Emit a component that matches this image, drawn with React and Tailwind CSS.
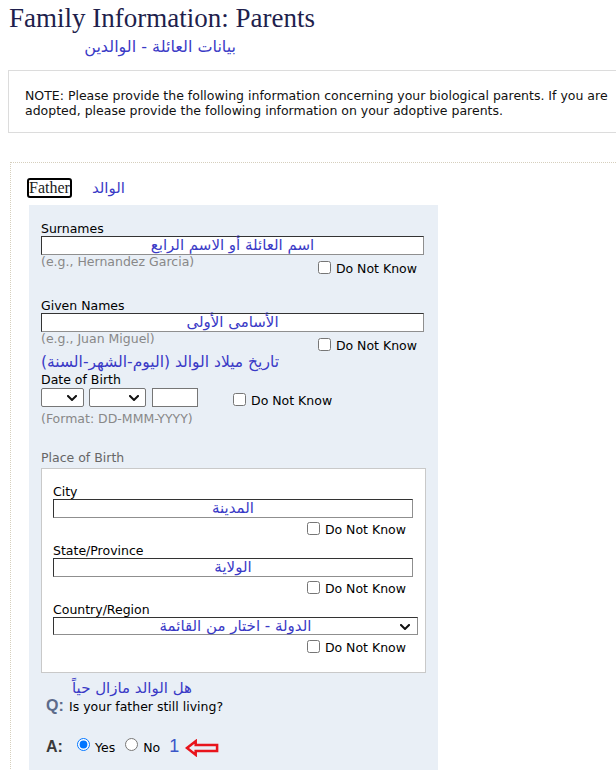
import React from 'react';

const sans = "font-['DejaVu_Sans',sans-serif]";
const arabic = "font-['DejaVu_Sans',sans-serif] text-[#3a3ac6]";
const insetBorder = "border border-t-[#333] border-l-[#333] border-r-[#8f8f8f] border-b-[#8f8f8f] bg-white";

const Chevron = ({ className }) => (
    <svg viewBox="0 0 10 6" className={className} fill="none">
        <path d="M1 1l4 4 4-4" stroke="#111" strokeWidth="2" strokeLinecap="square" />
    </svg>
);

const DoNotKnow = ({ className = '' }) => (
    <label className={`flex items-end gap-[5px] ${className}`}>
        <input type="checkbox" className="w-[13px] h-[13px]" />
        <span className="leading-[13px] translate-y-[1px]">Do Not Know</span>
    </label>
);

const TextBox = ({ text, className = '' }) => (
    <div className={`h-[19px] flex items-center justify-center ${insetBorder} ${className}`}>
        <span className={`${arabic} text-[15px] leading-none`}>{text}</span>
    </div>
);

const App = () => {
    return (
        <div className={`w-[616px] h-[770px] overflow-hidden bg-white text-[12.5px] text-black ${sans}`}>
            {/* Header */}
            <h1 className="pl-[9px] pt-[3px] text-[27px] leading-[30px] text-[#1f1f4d] font-['Liberation_Serif',serif]">
                Family Information: Parents
            </h1>
            <div dir="rtl" className={`${arabic} mt-[4px] w-[236px] text-[16px] leading-[20px] text-right`}>
                بيانات العائلة - الوالدين
            </div>

            {/* Note */}
            <div className="ml-[8px] mt-[13px] w-[640px] border border-[#dcdcdc] pl-[16px] pt-[17px] pb-[14px] leading-[15px] text-[#111] whitespace-nowrap">
                NOTE: Please provide the following information concerning your biological parents. If you are
                <br />
                adopted, please provide the following information on your adoptive parents.
            </div>

            {/* Form section */}
            <div className="ml-[10px] mt-[29px] w-[640px] border border-dotted border-[#d6cfbd] pl-[16px] pt-[15px] pb-[40px]">
                <div className="flex items-center gap-[20px]">
                    <span className="border-2 border-black rounded-[3px] text-[16px] leading-[16px] text-[#222] font-['Liberation_Serif',serif]">
                        Father
                    </span>
                    <span className={`${arabic} text-[15px] leading-[16px]`}>الوالد</span>
                </div>

                <div className="ml-[2px] mt-[7px] w-[409px] bg-[#e9eff6] px-[12px] pt-[17px] pb-[40px]">
                    {/* Surnames */}
                    <div className="leading-[14px]">Surnames</div>
                    <TextBox text="اسم العائلة أو الاسم الرابع" className="w-[383px]" />
                    <div className="flex justify-between w-[383px]">
                        <div className="leading-[14px] text-[#888]">(e.g., Hernandez Garcia)</div>
                        <DoNotKnow className="mt-[6px] mr-[7px]" />
                    </div>

                    {/* Given names */}
                    <div className="mt-[25px] leading-[14px]">Given Names</div>
                    <TextBox text="الأسامى الأولى" className="w-[383px]" />
                    <div className="flex justify-between w-[383px]">
                        <div className="leading-[14px] text-[#888]">(e.g., Juan Miguel)</div>
                        <DoNotKnow className="mt-[6px] mr-[7px]" />
                    </div>

                    {/* Date of birth */}
                    <div className="mt-[1px] flex">
                        <div dir="rtl" className={`${arabic} text-[15.5px] leading-[20px] whitespace-nowrap`}>
                            تاريخ ميلاد الوالد (اليوم-الشهر-السنة)
                        </div>
                    </div>
                    <div className="mt-[1px] leading-[14px]">Date of Birth</div>
                    <div className="mt-[1px] flex items-center">
                        <div className="w-[43px] h-[19px] border border-[#767676] rounded-[2px] bg-white flex items-center justify-end pr-[6px]">
                            <Chevron className="w-[10px] h-[6px]" />
                        </div>
                        <div className="ml-[5px] w-[57px] h-[19px] border border-[#767676] rounded-[2px] bg-white flex items-center justify-end pr-[6px]">
                            <Chevron className="w-[10px] h-[6px]" />
                        </div>
                        <div className="ml-[6px] w-[46px] h-[19px] border border-[#767676] bg-white" />
                        <DoNotKnow className="ml-[35px] translate-y-[2px]" />
                    </div>
                    <div className="mt-[5px] leading-[14px] text-[#888]">(Format: DD-MMM-YYYY)</div>

                    {/* Place of birth */}
                    <div className="mt-[25px] leading-[14px] text-[#666]">Place of Birth</div>
                    <div className="mt-[3px] border border-[#c9c9c9] bg-white px-[11px] pt-[16px] pb-[19px]">
                        <div className="leading-[14px]">City</div>
                        <TextBox text="المدينة" className="w-[360px]" />
                        <div className="mt-[4px] flex justify-end w-[360px]">
                            <DoNotKnow className="mr-[7px]" />
                        </div>

                        <div className="mt-[9px] leading-[14px]">State/Province</div>
                        <TextBox text="الولاية" className="w-[360px]" />
                        <div className="mt-[4px] flex justify-end w-[360px]">
                            <DoNotKnow className="mr-[7px]" />
                        </div>

                        <div className="mt-[9px] leading-[14px]">Country/Region</div>
                        <div className={`relative h-[18px] w-[365px] flex items-center justify-center ${insetBorder}`}>
                            <span className={`${arabic} text-[15px] leading-none`}>الدولة - اختار من القائمة</span>
                            <Chevron className="absolute right-[7px] top-[6px] w-[10px] h-[6px]" />
                        </div>
                        <div className="mt-[5px] flex justify-end w-[360px]">
                            <DoNotKnow className="mr-[7px]" />
                        </div>
                    </div>

                    {/* Question */}
                    <div dir="rtl" className={`${arabic} mt-[5px] w-[151px] text-[15px] leading-[20px] text-right`}>
                        هل الوالد مازال حياً
                    </div>
                    <div className="flex items-baseline ml-[5px]">
                        <span className="w-[23px] text-[16px] leading-[16px] font-bold text-[#5c6b8a] font-['Liberation_Sans',sans-serif]">Q:</span>
                        <span>Is your father still living?</span>
                    </div>
                    <div className="mt-[16px] ml-[5px] flex items-baseline">
                        <span className="w-[31px] text-[16px] leading-[16px] font-bold text-[#3a3a3a] font-['Liberation_Sans',sans-serif]">A:</span>
                        <input type="radio" name="living" defaultChecked className="w-[13px] h-[13px] translate-y-[-1px]" />
                        <span className="ml-[5px]">Yes</span>
                        <input type="radio" name="living" className="ml-[10px] w-[13px] h-[13px] translate-y-[-1px]" />
                        <span className="ml-[5px]">No</span>
                        <span className="ml-[9px] text-[18px] text-[#3a55c8] font-['Liberation_Sans',sans-serif]">1</span>
                        <svg viewBox="0 0 36 18" className="ml-[6px] w-[35px] h-[18px] self-center translate-y-[2px]">
                            <path d="M2 9L11 2V6H33V12H11V16Z" fill="none" stroke="#e8141c" strokeWidth="2.6" strokeLinejoin="miter" />
                        </svg>
                    </div>
                </div>
            </div>
        </div>
    );
};

export default App;
